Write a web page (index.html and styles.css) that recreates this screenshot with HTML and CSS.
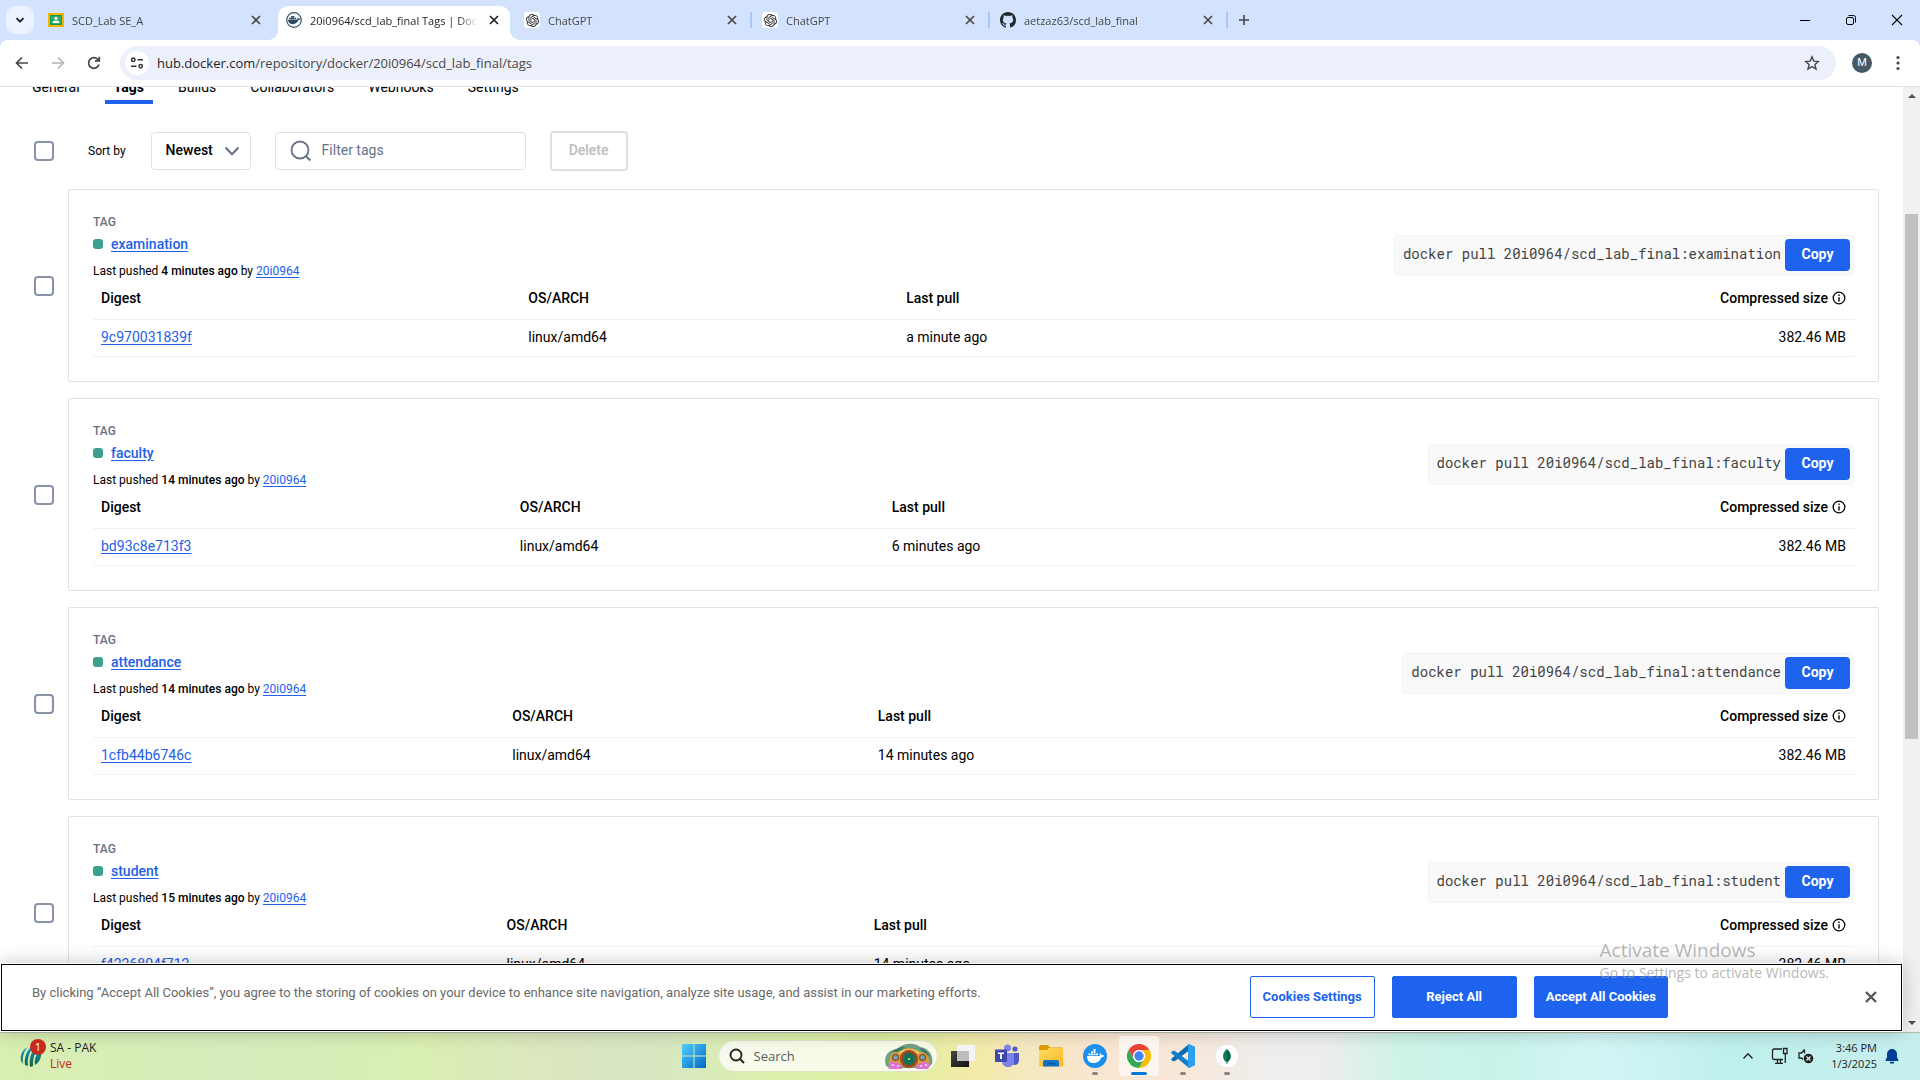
FILE: index.html
```html
<!DOCTYPE html>
<html lang="en">
<head>
<meta charset="utf-8">
<title>20i0964/scd_lab_final Tags | Docker Hub</title>
<link rel="stylesheet" href="styles.css">
</head>
<body>
<svg class="sprite" aria-hidden="true">
  <symbol id="i-x" viewBox="0 0 12 12"><path d="M2 2l8 8M10 2l-8 8" fill="none" stroke="currentColor" stroke-width="1.7"/></symbol>
  <symbol id="i-gpt" viewBox="0 0 24 24"><path fill="currentColor" d="M22.28 9.82a5.98 5.98 0 0 0-.51-4.91 6.05 6.05 0 0 0-6.51-2.9A6.07 6.07 0 0 0 4.98 4.18a5.98 5.98 0 0 0-4 2.9 6.05 6.05 0 0 0 .74 7.1 5.98 5.98 0 0 0 .51 4.91 6.05 6.05 0 0 0 6.51 2.9A5.98 5.98 0 0 0 13.26 24a6.06 6.06 0 0 0 5.77-4.21 5.99 5.99 0 0 0 4-2.9 6.06 6.06 0 0 0-.75-7.07zm-9.02 12.61a4.48 4.48 0 0 1-2.88-1.04l.14-.08 4.78-2.76a.8.8 0 0 0 .39-.68v-6.74l2.02 1.17a.07.07 0 0 1 .04.05v5.58a4.5 4.5 0 0 1-4.49 4.5zM3.6 18.3a4.47 4.47 0 0 1-.54-3.01l.14.09 4.78 2.76a.77.77 0 0 0 .78 0l5.84-3.37v2.33a.08.08 0 0 1-.03.06L9.74 19.95a4.5 4.5 0 0 1-6.14-1.65zM2.34 7.9a4.49 4.49 0 0 1 2.37-1.98v5.68a.77.77 0 0 0 .39.68l5.81 3.35-2.02 1.17a.08.08 0 0 1-.07 0l-4.83-2.79A4.5 4.5 0 0 1 2.34 7.87zm16.6 3.86l-5.84-3.39 2.02-1.16a.08.08 0 0 1 .07 0l4.83 2.79a4.49 4.49 0 0 1-.68 8.1v-5.68a.79.79 0 0 0-.4-.66zm2.01-3.03l-.14-.09-4.77-2.78a.78.78 0 0 0-.79 0L9.41 9.23V6.9a.07.07 0 0 1 .03-.06l4.83-2.79a4.5 4.5 0 0 1 6.68 4.66zM8.31 12.86l-2.02-1.16a.08.08 0 0 1-.04-.06V6.07a4.5 4.5 0 0 1 7.38-3.45l-.14.08L8.7 5.46a.8.8 0 0 0-.39.68zm1.1-2.37l2.6-1.5 2.6 1.5v3l-2.6 1.5-2.6-1.5z"/></symbol>
  <symbol id="i-info" viewBox="0 0 14 14"><circle cx="7" cy="7" r="5.8" fill="none" stroke="currentColor" stroke-width="1.3"/><path d="M6.3 3.6h1.4V5H6.3zM6.3 6.2h1.4v4.2H6.3z" fill="currentColor"/></symbol>
</svg>

<header class="tabstrip">
  <button class="tab-search" aria-label="Search tabs"><svg viewBox="0 0 12 12" width="12" height="12"><path d="M2.5 4.2L6 7.7l3.5-3.5" fill="none" stroke="#1f1f1f" stroke-width="1.8"/></svg></button>
  <div class="tab">
    <svg class="favicon" viewBox="0 0 16 16"><path fill="#f4b400" d="M0 1h16v14H0z"/><path fill="#0f9d58" d="M2 3h12v10H2z"/><path fill="#57bb8a" d="M3 4h10v8H3z" opacity=".4"/><circle cx="8" cy="6.3" r="1.6" fill="#fff"/><path fill="#fff" d="M4.5 11c0-2 2-2.6 3.500-2.600s3.500.6 3.500 2.600z"/></svg>
    <span class="tab-title">SCD_Lab SE_A</span>
    <button class="tab-close" aria-label="Close tab"><svg><use href="#i-x"/></svg></button>
  </div>
  <div class="tab active">
    <svg class="favicon" viewBox="0 0 16 16"><circle cx="8" cy="8" r="7.300" fill="#fff" stroke="#33566b" stroke-width="1.200"/><path fill="#26495f" d="M2 7.500h9.500c.3-.9.200-1.600-.2-2.200.9.200 1.300.7 1.400 1.400.6-.2 1.200-.1 1.600.2-.4.900-1.200 1.200-2 1.200-1 2.700-2.800 4.100-5.500 4.100C3.800 12.200 2.100 10.400 2 7.500zM3.400 5.700h4.900v1.400H3.400zM5.200 4h3.100v1.400H5.200zM8.600 5.700h1.500v1.400H8.600z"/></svg>
    <span class="tab-title">20i0964/scd_lab_final Tags | Docker Hub</span>
    <button class="tab-close" aria-label="Close tab"><svg><use href="#i-x"/></svg></button>
  </div>
  <div class="tab divided">
    <span class="favicon gpt"><svg><use href="#i-gpt"/></svg></span>
    <span class="tab-title">ChatGPT</span>
    <button class="tab-close" aria-label="Close tab"><svg><use href="#i-x"/></svg></button>
  </div>
  <div class="tab divided">
    <span class="favicon gpt"><svg><use href="#i-gpt"/></svg></span>
    <span class="tab-title">ChatGPT</span>
    <button class="tab-close" aria-label="Close tab"><svg><use href="#i-x"/></svg></button>
  </div>
  <div class="tab divided">
    <svg class="favicon" viewBox="0 0 16 16"><path fill="#24292f" d="M8 0C3.580 0 0 3.580 0 8c0 3.540 2.290 6.530 5.470 7.590.4.070.55-.17.55-.38 0-.19-.01-.82-.01-1.490-2.010.37-2.530-.49-2.690-.94-.09-.23-.48-.94-.82-1.130-.28-.15-.68-.52-.01-.53.63-.01 1.080.58 1.230.82.72 1.210 1.870.87 2.330.66.07-.52.28-.87.51-1.070-1.780-.2-3.640-.89-3.640-3.950 0-.87.31-1.590.82-2.150-.08-.2-.36-1.020.08-2.120 0 0 .67-.21 2.200.82.64-.18 1.320-.27 2-.27s1.360.09 2 .27c1.530-1.040 2.200-.82 2.200-.82.44 1.100.16 1.920.08 2.120.51.56.82 1.270.82 2.150 0 3.070-1.870 3.750-3.650 3.950.29.25.54.73.54 1.480 0 1.070-.01 1.930-.01 2.200 0 .21.15.46.55.38A8.010 8.010 0 0 0 16 8c0-4.420-3.580-8-8-8z"/></svg>
    <span class="tab-title">aetzaz63/scd_lab_final</span>
    <button class="tab-close" aria-label="Close tab"><svg><use href="#i-x"/></svg></button>
  </div>
  <button class="new-tab" aria-label="New tab"><svg viewBox="0 0 12 12" width="12" height="12"><path d="M6 1v10M1 6h10" stroke="#474747" stroke-width="1.600"/></svg></button>
  <div class="window-controls">
    <button aria-label="Minimize"><svg viewBox="0 0 12 12"><path d="M1 6.500h10" stroke="#000"/></svg></button>
    <button aria-label="Restore"><svg viewBox="0 0 12 12" fill="none" stroke="#000"><rect x="1.500" y="3.500" width="7" height="7" rx="1.500"/><path d="M3.500 1.500h5a2 2 0 0 1 2 2v5"/></svg></button>
    <button aria-label="Close"><svg viewBox="0 0 12 12"><path d="M1 1l10 10M11 1L1 11" stroke="#000" stroke-width="1.100"/></svg></button>
  </div>
</header>

<div class="toolbar-back">
<nav class="toolbar" aria-label="Browser toolbar">
  <button class="nav-button" aria-label="Back"><svg viewBox="0 0 16 16"><path d="M14 8H3M8 2.500L2.500 8 8 13.500"/></svg></button>
  <button class="nav-button disabled" aria-label="Forward"><svg viewBox="0 0 16 16"><path d="M2 8h11M8 2.500L13.500 8 8 13.500"/></svg></button>
  <button class="nav-button" aria-label="Reload"><svg viewBox="0 0 16 16"><path d="M13 9.500A5.300 5.300 0 1 1 12.300 5M13.300 1.700v4.200H9"/></svg></button>
  <div class="omnibox">
    <button class="site-info" aria-label="Site information"><svg viewBox="0 0 14 14" width="14" height="14" fill="none" stroke="#333" stroke-width="1.500"><circle cx="3.300" cy="3.800" r="1.700"/><path d="M7.500 3.800H13M1 10.200h5.500"/><circle cx="10.700" cy="10.200" r="1.700"/></svg></button>
    <div class="url"><span class="host">hub.docker.com</span>/repository/docker/20i0964/scd_lab_final/tags</div>
    <button class="bookmark" aria-label="Bookmark this tab"><svg viewBox="0 0 16 16" width="16" height="16"><path d="M8 1.800l1.800 4.300 4.600.4-3.500 3 1.100 4.500L8 11.600 4 14l1.100-4.500-3.500-3 4.600-.4z" fill="none" stroke="#474747" stroke-width="1.400"/></svg></button>
  </div>
  <button class="avatar" aria-label="Profile">M</button>
  <button class="menu" aria-label="Menu"><svg viewBox="0 0 4 16" width="4" height="16"><circle cx="2" cy="2.500" r="1.600"/><circle cx="2" cy="8" r="1.600"/><circle cx="2" cy="13.500" r="1.600"/></svg></button>
</nav>
</div>

<div class="viewport">
  <main class="page">
    <nav class="repo-tabs" aria-label="Repository">
      <a href="#general">General</a>
      <a href="#tags" class="current">Tags</a>
      <a href="#builds">Builds</a>
      <a href="#collaborators">Collaborators</a>
      <a href="#webhooks">Webhooks</a>
      <a href="#settings">Settings</a>
    </nav>

    <div class="filters">
      <input type="checkbox" class="check" aria-label="Select all tags">
      <label class="sort-label" for="sort">Sort by</label>
      <div class="select-wrap">
        <select id="sort"><option>Newest</option><option>Oldest</option></select>
        <svg viewBox="0 0 16 10" width="16" height="10"><path d="M1.500 1.500L8 8.300l6.500-6.800" fill="none" stroke="#677285" stroke-width="2"/></svg>
      </div>
      <div class="search-wrap">
        <svg viewBox="0 0 22 22" width="22" height="22"><circle cx="10" cy="10" r="8.500" fill="none" stroke="#677285" stroke-width="1.800"/><path d="M16 16.200l4.300 4.300" stroke="#677285" stroke-width="2"/></svg>
        <input type="text" placeholder="Filter tags" aria-label="Filter tags">
      </div>
      <button class="delete" disabled>Delete</button>
    </div>

    <div class="tag-row">
      <input type="checkbox" class="check" aria-label="Select examination">
      <article class="card">
        <div class="card-head">
          <div>
            <div class="overline">TAG</div>
            <div class="tag-name"><span class="dot"></span><a href="#examination">examination</a></div>
            <div class="pushed">Last pushed <b>4 minutes ago</b> by <a href="#20i0964">20i0964</a></div>
          </div>
          <div class="pull"><code>docker pull 20i0964/scd_lab_final:examination</code><button>Copy</button></div>
        </div>
        <table>
          <tr><th>Digest</th><th>OS/ARCH</th><th>Last pull</th><th class="size"><span>Compressed size <svg class="info"><use href="#i-info"/></svg></span></th></tr>
          <tr><td><a href="#9c970031839f">9c970031839f</a></td><td>linux/amd64</td><td>a minute ago</td><td class="size">382.46 MB</td></tr>
        </table>
      </article>
    </div>

    <div class="tag-row">
      <input type="checkbox" class="check" aria-label="Select faculty">
      <article class="card">
        <div class="card-head">
          <div>
            <div class="overline">TAG</div>
            <div class="tag-name"><span class="dot"></span><a href="#faculty">faculty</a></div>
            <div class="pushed">Last pushed <b>14 minutes ago</b> by <a href="#20i0964">20i0964</a></div>
          </div>
          <div class="pull"><code>docker pull 20i0964/scd_lab_final:faculty</code><button>Copy</button></div>
        </div>
        <table>
          <tr><th>Digest</th><th>OS/ARCH</th><th>Last pull</th><th class="size"><span>Compressed size <svg class="info"><use href="#i-info"/></svg></span></th></tr>
          <tr><td><a href="#bd93c8e713f3">bd93c8e713f3</a></td><td>linux/amd64</td><td>6 minutes ago</td><td class="size">382.46 MB</td></tr>
        </table>
      </article>
    </div>

    <div class="tag-row">
      <input type="checkbox" class="check" aria-label="Select attendance">
      <article class="card">
        <div class="card-head">
          <div>
            <div class="overline">TAG</div>
            <div class="tag-name"><span class="dot"></span><a href="#attendance">attendance</a></div>
            <div class="pushed">Last pushed <b>14 minutes ago</b> by <a href="#20i0964">20i0964</a></div>
          </div>
          <div class="pull"><code>docker pull 20i0964/scd_lab_final:attendance</code><button>Copy</button></div>
        </div>
        <table>
          <tr><th>Digest</th><th>OS/ARCH</th><th>Last pull</th><th class="size"><span>Compressed size <svg class="info"><use href="#i-info"/></svg></span></th></tr>
          <tr><td><a href="#1cfb44b6746c">1cfb44b6746c</a></td><td>linux/amd64</td><td>14 minutes ago</td><td class="size">382.46 MB</td></tr>
        </table>
      </article>
    </div>

    <div class="tag-row">
      <input type="checkbox" class="check" aria-label="Select student">
      <article class="card">
        <div class="card-head">
          <div>
            <div class="overline">TAG</div>
            <div class="tag-name"><span class="dot"></span><a href="#student">student</a></div>
            <div class="pushed">Last pushed <b>15 minutes ago</b> by <a href="#20i0964">20i0964</a></div>
          </div>
          <div class="pull"><code>docker pull 20i0964/scd_lab_final:student</code><button>Copy</button></div>
        </div>
        <table>
          <tr><th>Digest</th><th>OS/ARCH</th><th>Last pull</th><th class="size"><span>Compressed size <svg class="info"><use href="#i-info"/></svg></span></th></tr>
          <tr><td><a href="#f4226804f712">f4226804f712</a></td><td>linux/amd64</td><td>14 minutes ago</td><td class="size">382.46 MB</td></tr>
        </table>
      </article>
    </div>
  </main>

  <div class="scrollbar" aria-hidden="true">
    <svg viewBox="0 0 8 4" width="8" height="4"><path d="M4 0l4 4H0z" fill="#505050"/></svg>
    <div class="track"><div class="thumb"></div></div>
    <svg viewBox="0 0 8 4" width="8" height="4"><path d="M0 0h8L4 4z" fill="#505050"/></svg>
  </div>

  <section class="cookies" aria-label="Cookie banner">
    <p>By clicking “Accept All Cookies”, you agree to the storing of cookies on your device to enhance site navigation, analyze site usage, and assist in our marketing efforts.</p>
    <button class="outline">Cookies Settings</button>
    <button>Reject All</button>
    <button>Accept All Cookies</button>
    <button class="dismiss" aria-label="Close"><svg viewBox="0 0 12 12" width="12" height="12"><path d="M1 1l10 10M11 1L1 11" stroke="#565656" stroke-width="2.400"/></svg></button>
  </section>

  <div class="activation">
    <div class="activation-title">Activate Windows</div>
    <div>Go to Settings to activate Windows.</div>
  </div>
</div>

<footer class="taskbar">
  <div class="widgets">
    <span class="widget-icon">
      <svg viewBox="0 0 22 24" width="22" height="24"><defs><linearGradient id="g-globe" x1="0" y1="0" x2="0" y2="1"><stop offset="0" stop-color="#19a0e0"/><stop offset=".5" stop-color="#147a8c"/><stop offset="1" stop-color="#12663a"/></linearGradient></defs><path fill="url(#g-globe)" d="M8 3C3 5 0 10 1 17l2 3C2 13 4 7 8 3zM12 2C7 6 4 13 5 21l3 1C7 15 9 8 14 3zM15 4c-4 4-6 11-5 19l3-1c0-7 1-12 5-16zM19 7c-3 4-5 9-4 14 4-2 7-8 6-13z"/></svg>
      <span class="badge">1</span>
    </span>
    <div class="widget-text"><div>SA - PAK</div><div class="live">Live</div></div>
  </div>

  <div class="apps">
    <button class="app" aria-label="Start"><svg viewBox="0 0 24 24"><defs><linearGradient id="g-win" x1="0" y1="0" x2="1" y2="1"><stop offset="0" stop-color="#50cffa"/><stop offset="1" stop-color="#0067c8"/></linearGradient></defs><path fill="url(#g-win)" d="M0 0h11.500v11.500H0zM12.500 0H24v11.500H12.500zM0 12.500h11.500V24H0zM12.500 12.500H24V24H12.500z"/></svg></button>
    <div class="task-search">
      <svg viewBox="0 0 16 16" width="16" height="16"><circle cx="7" cy="7" r="5.500" fill="none" stroke="#222" stroke-width="1.800"/><path d="M11 11l4 4" stroke="#222" stroke-width="2"/></svg>
      <input type="text" placeholder="Search" aria-label="Search">
      <svg viewBox="0 0 50 26" width="50" height="26"><path fill="#6fa184" d="M2 23C-1 13 4 7 13 6 19 0 30-1 36 4c9 1 14 9 12 17l-4 4H6z"/><path fill="#3f7d62" d="M8 9c4-4 9-5 13-5l-6 6zM36 5c6 1 9 5 10 9l-8-5z"/><path fill="#d59b3a" d="M5 23c-1-7 1-12 6-14 5 1 7-4 14-4s9 5 14 4c5 2 7 7 6 14z"/><path fill="#efc860" d="M14 10c3-3 6-4 11-4s8 1 11 4l-2 1c-3-2-5-3-9-3s-6 1-9 3z"/><circle cx="25" cy="16" r="9" fill="#8f4a24"/><circle cx="25" cy="16" r="8.500" fill="none" stroke="#c8502c" stroke-width="1.500" stroke-dasharray="2 2"/><circle cx="25" cy="16" r="6" fill="#137a5f"/><path stroke="#0c5a46" stroke-width=".8" d="M22 11v10M28 11v10M25 10v12"/><circle cx="25" cy="16" r="1" fill="#ffe27a"/><circle cx="11.500" cy="14.500" r="3.500" fill="#8a4a2a"/><circle cx="11.500" cy="14.500" r="2.300" fill="#6ea9ad"/><circle cx="38.500" cy="14.500" r="3.500" fill="#8a4a2a"/><circle cx="38.500" cy="14.500" r="2.300" fill="#6ea9ad"/><path fill="#dd75cf" d="M4 25l2-5 3-2 2 2 2-1 2 2 2 1 1 4H6zM32 26l1-4 3-1 2-3 2 2 3-1 3 3-2 4z"/><path fill="#f3c0ee" d="M8 21h2v2H8zM13 22h2v2h-2zM36 22h2v2h-2zM41 21h2v2h-2z"/></svg>
    </div>
    <button class="app" aria-label="Task view"><svg viewBox="0 0 24 24"><defs><linearGradient id="g-tv" x1="0" y1="0" x2="1" y2="1"><stop offset="0" stop-color="#444"/><stop offset="1" stop-color="#111"/></linearGradient></defs><path fill="url(#g-tv)" d="M0 7h18v16H0z"/><path fill="#f4f4f4" d="M6 1h18v16H6z"/><path fill="#bdbdbd" d="M6 7h12v10H6z"/></svg></button>
    <button class="app" aria-label="Teams"><svg viewBox="0 0 24 24"><circle cx="20" cy="5" r="2.600" fill="#5059c9"/><circle cx="12.500" cy="4" r="3.500" fill="#7b83eb"/><path fill="#5059c9" d="M16 9h8v7c0 3-2 5-4 5s-4-2-4-4z"/><path fill="#7b83eb" d="M7 9h12v8c0 4-3 6-6 6s-6-2-6-6z"/><rect y="5.500" width="12" height="12.500" rx="1" fill="#4048a8"/><path fill="#fff" d="M3 8.500h6v1.600H6.900V15H5.100v-4.900H3z"/></svg></button>
    <button class="app" aria-label="File Explorer"><svg viewBox="0 0 24 24"><defs><linearGradient id="g-f" x1="0" y1="0" x2="1" y2="1"><stop offset="0" stop-color="#ffdb6b"/><stop offset="1" stop-color="#fbb917"/></linearGradient></defs><path fill="#dd9a05" d="M0 2.500L1.500 1H9l2 2.500H23.500V8H0z"/><path fill="url(#g-f)" d="M0 6h8l2-2h14v18.500H0z"/><path fill="#0f72c9" d="M4 22.500V18a2 2 0 0 1 2-2h12a2 2 0 0 1 2 2v4.500z"/><path fill="#0a4f98" d="M8 19h8v1.500H8z"/></svg></button>
    <button class="app running" aria-label="Docker Desktop"><svg viewBox="0 0 24 24"><circle cx="12" cy="12" r="12" fill="#1d90ed"/><path fill="#fff" d="M4 12h12.500c.7-1.200.5-2.200 0-3 1.300.4 1.900 1.200 2 2.200 1-.2 1.900-.1 2.700.5-.6 1.300-1.700 1.700-2.900 1.700C16.800 17 14 19 10.300 19 6.300 19 4 16.500 4 12zM5.500 9.500h2V11.300h-2zM8 9.500h2v1.800H8zM10.500 9.500h2v1.800h-2zM13 9.500h2v1.800h-2zM8 7.300h2v1.800H8zM10.500 7.300h2v1.800h-2zM10.500 5.100h2v1.800h-2z"/></svg></button>
    <button class="app running current" aria-label="Google Chrome"><svg viewBox="0 0 24 24"><circle cx="12" cy="12" r="12" fill="#fff"/><path fill="#ea4335" d="M1.600 6A12 12 0 0 1 22.400 6H12a6 6 0 0 0-5.200 9z"/><path fill="#fbbc04" d="M22.400 6A12 12 0 0 1 12 24l5.200-9A6 6 0 0 0 12 6z"/><path fill="#34a853" d="M12 24A12 12 0 0 1 1.600 6l5.200 9a6 6 0 0 0 10.400 0z"/><circle cx="12" cy="12" r="6" fill="#fff"/><circle cx="12" cy="12" r="4.700" fill="#4285f4"/></svg></button>
    <button class="app running" aria-label="Visual Studio Code"><svg viewBox="0 0 24 24"><path fill="#0b6eb5" d="M18 0L0 15l1.500 2.300L4 17 18 6.500z"/><path fill="#1180c9" d="M18 24L0 9l1.500-2.300L4 7l14 10.500z"/><path fill="#2ba0ee" d="M17 0h1l6 2.700v18.600L18 24h-1z"/></svg></button>
    <button class="app running" aria-label="MongoDB Compass"><svg viewBox="0 0 24 24"><circle cx="12" cy="12" r="11" fill="#fff"/><path fill="#00684a" d="M12 5c3 3 4.200 5 3.800 8-.3 2.400-1.700 4-3.300 5l-.2 2h-.6l-.2-2c-1.600-1-3-2.600-3.300-5C7.800 10 9 8 12 5z"/><path fill="#12905c" d="M12 5v15h-.3l-.2-2c-1.600-1-3-2.600-3.300-5C7.800 10 9 8 12 5z" opacity=".5"/></svg></button>
  </div>

  <div class="tray">
    <button class="tray-button" aria-label="Show hidden icons"><svg viewBox="0 0 12 12" width="12" height="12"><path d="M1.500 8.500L6 3.800l4.500 4.700" fill="none" stroke="#222" stroke-width="1.400"/></svg></button>
    <button class="status" aria-label="Network and sound">
      <svg viewBox="0 0 18 18" width="18" height="18" fill="none" stroke="#222" stroke-width="1.300"><path d="M11 2H3a1.500 1.500 0 0 0-1.500 1.500V11A1.500 1.500 0 0 0 3 12.500h9M4 16.300h8M6.500 12.500v3.800M9.500 12.500v3.800M12.500 1.500h3.500v5h-3.500zM14.300 6.500V16"/></svg>
      <svg viewBox="0 0 18 18" width="18" height="18"><path d="M7.500 2.500v4M7.500 2.500L4.500 6H2v5h2.500l1.500 1.500" fill="none" stroke="#222" stroke-width="1.300"/><circle cx="11.500" cy="11.500" r="4.800" fill="#222"/><path d="M9.500 9.500l4 4M13.500 9.500l-4 4" stroke="#d5f5f2" stroke-width="1.200"/></svg>
    </button>
    <div class="clock"><div>3:46 PM</div><div>1/3/2025</div></div>
    <button class="bell" aria-label="Notifications"><svg viewBox="0 0 14 16" width="14" height="16"><path fill="#003e92" d="M7 1a5 5 0 0 1 5 5v3.500l1.500 2.500v1H.5v-1L2 9.500V6a5 5 0 0 1 5-5zM4.500 13.800h5a2.500 2 0 0 1-5 0z"/></svg></button>
  </div>
</footer>
</body>
</html>
```
FILE: styles.css
```css
* { box-sizing: border-box; }

body {
  margin: 0;
  height: 100vh;
  display: flex;
  flex-direction: column;
  overflow: hidden;
  background: #fff;
  color: #000;
  font: 14px/20px Roboto, sans-serif;
}

button {
  margin: 0;
  padding: 0;
  border: 0;
  background: none;
  font: inherit;
  color: inherit;
}

a { color: #2560e8; text-underline-offset: 2px; }

.sprite { position: absolute; width: 0; height: 0; }

/* Browser tab strip */
.tabstrip {
  flex: none;
  display: flex;
  align-items: center;
  height: 40px;
  padding-left: 6px;
  background: #d3e3fd;
  font: 11px/16px "Segoe UI", "Open Sans", sans-serif;
  color: #474747;
}

.tab-search {
  display: grid;
  place-items: center;
  width: 28px;
  height: 28px;
  margin-right: 6px;
  border-radius: 10px;
  background: #ecf3fe;
}

.tab {
  position: relative;
  display: flex;
  align-items: center;
  gap: 8px;
  width: 232px;
  height: 34px;
  margin: 6px 6px 0 0;
  padding: 0 8px 6px;
}

.tab.active {
  background: #fff;
  border-radius: 10px 10px 0 0;
  color: #1f1f1f;
}

.tab.active::before,
.tab.active::after {
  content: "";
  position: absolute;
  bottom: 0;
  width: 10px;
  height: 10px;
}

.tab.active::before { right: 100%; background: radial-gradient(circle at 0 0, transparent 10px, #fff 10px); }
.tab.active::after { left: 100%; background: radial-gradient(circle at 100% 0, transparent 10px, #fff 10px); }

.tab.divided::after {
  content: "";
  position: absolute;
  left: 234px;
  top: 6px;
  width: 2px;
  height: 16px;
  background: #a8c7fa;
}

.favicon { flex: none; width: 16px; height: 16px; }

.gpt {
  display: grid;
  place-items: center;
  border-radius: 3px;
  background: #fff;
  color: #222;
}

.gpt svg { width: 13px; height: 13px; }

.tab-title {
  flex: 1;
  min-width: 0;
  padding-top: 2px;
  overflow: hidden;
  white-space: nowrap;
  mask-image: linear-gradient(to right, #000 calc(100% - 20px), transparent);
}

.tab-close { display: grid; place-items: center; width: 16px; height: 16px; }
.tab-close svg { width: 12px; height: 12px; }

.new-tab { display: grid; place-items: center; width: 28px; height: 28px; }

.window-controls { display: flex; margin-left: auto; }
.window-controls button { display: grid; place-items: center; width: 46px; height: 40px; }
.window-controls svg { width: 12px; height: 12px; }

/* Browser toolbar */
.toolbar-back { flex: none; background: #d3e3fd; }

.toolbar {
  display: flex;
  align-items: center;
  height: 47px;
  padding: 0 10px 1px 4px;
  border-bottom: 1px solid #dfe1e5;
  border-radius: 8px 8px 0 0;
  background: #fff;
  font-family: "Segoe UI", "Open Sans", sans-serif;
}

.nav-button { display: grid; place-items: center; width: 36px; height: 34px; }
.nav-button svg { width: 16px; height: 16px; fill: none; stroke: #474747; stroke-width: 1.7; }
.nav-button.disabled svg { stroke: #b4b4b4; }

.omnibox {
  flex: 1;
  display: flex;
  align-items: center;
  height: 34px;
  margin-left: 8px;
  padding: 0 16px 0 5px;
  border-radius: 17px;
  background: #ecf0fa;
}

.site-info {
  display: grid;
  place-items: center;
  width: 24px;
  height: 24px;
  margin-right: 8px;
  border-radius: 12px;
  background: #fff;
}

.url { flex: 1; font-size: 13px; color: #474747; }
.host { color: #1f1f1f; }
.bookmark { display: grid; place-items: center; width: 16px; height: 16px; }

.avatar {
  width: 20px;
  height: 20px;
  margin: 0 14px 0 16px;
  border-radius: 10px;
  background: #455a64;
  color: #fff;
  font: 11px/20px Roboto, sans-serif;
}

.menu { display: grid; place-items: center; width: 24px; height: 24px; fill: #474747; }

/* Page area */
.viewport {
  flex: 1;
  min-height: 0;
  position: relative;
  display: flex;
}

.page {
  flex: 1;
  min-width: 0;
  overflow: hidden;
  padding: 0 24px 0 34px;
}

.scrollbar {
  display: flex;
  flex-direction: column;
  align-items: center;
  width: 17px;
  padding: 7px 2px;
  background: #f1f1f1;
}

.track { flex: 1; width: 100%; padding: 116px 0 0; }
.thumb { height: 65%; min-height: 40px; background: #c1c1c1; }

/* The page is scrolled, so the row of links is cut by the toolbar. */
.repo-tabs {
  display: flex;
  gap: 16px;
  margin: -10px 0 27px -11px;
}

.repo-tabs a {
  padding: 0 9px 3px;
  border-bottom: 4px solid transparent;
  color: #000;
  text-decoration: none;
}

.repo-tabs .current { border-color: #1d63ed; font-weight: 700; }

.filters {
  display: flex;
  align-items: center;
  margin-bottom: 18px;
}

.check {
  flex: none;
  appearance: none;
  width: 20px;
  height: 20px;
  margin: 0;
  border: 2px solid #8993a8;
  border-radius: 4px;
  background: #fff;
}

.sort-label { margin: 0 25px 0 34px; font-size: 12px; }

.select-wrap, .search-wrap { display: grid; align-items: center; }
.select-wrap > *, .search-wrap > * { grid-area: 1 / 1; }

.select-wrap select,
.search-wrap input {
  appearance: none;
  height: 38px;
  border: 1px solid #dfe1e6;
  border-radius: 4px;
  background: #fff;
  color: #000;
  font: 14px/20px Roboto, sans-serif;
}

.select-wrap select { width: 100px; padding: 0 14px 2px; font-weight: 500; }
.select-wrap svg { justify-self: end; margin-right: 11px; pointer-events: none; }

.search-wrap { margin: 0 24px; }
.search-wrap input { width: 251px; padding: 0 12px 2px 46px; }
.search-wrap input::placeholder { color: #677285; opacity: 1; }
.search-wrap svg { z-index: 1; margin-left: 15px; }

.delete {
  width: 78px;
  height: 40px;
  padding-bottom: 2px;
  border: 2px solid #dfdfe2;
  border-radius: 4px;
  color: #bcbcbe;
  font-weight: 500;
}

.tag-row {
  display: flex;
  align-items: center;
  gap: 14px;
  margin-bottom: 16px;
}

.card {
  flex: 1;
  min-width: 0;
  padding: 24px;
  border: 1px solid #e1e2e6;
  border-radius: 2px;
}

.card-head { display: flex; justify-content: space-between; align-items: flex-end; }

.overline { font-size: 12px; line-height: 16px; font-weight: 500; color: #677285; }

.tag-name {
  display: flex;
  align-items: center;
  gap: 8px;
  margin: 4px 0 8px;
  font-weight: 500;
}

.dot { width: 10px; height: 10px; border-radius: 3px; background: #3ba08d; }

.pushed { font-size: 12px; line-height: 18px; }
.pushed b { font-weight: 500; }

.pull {
  display: flex;
  align-items: center;
  gap: 4px;
  margin-bottom: 4px;
  padding: 3px 3px 4px 8px;
  border: 1px solid #f3f4f6;
  border-radius: 4px;
  background: #f9f9fa;
}

.pull code { padding-bottom: 2px; color: #444; font: 14px/20px "Roboto Mono", "DejaVu Sans Mono", monospace; }

.pull button {
  width: 65px;
  height: 32px;
  padding-bottom: 2px;
  border-radius: 4px;
  background: #1d63ed;
  color: #fff;
  font-weight: 700;
}

table { width: 100%; border-collapse: separate; border-spacing: 0; }
th, td { padding: 7px 8px 9px; border-bottom: 1px solid #f1f2f4; text-align: left; font-weight: 400; }
th { padding: 8px 8px 11px; font-weight: 500; }
.size { text-align: right; }
.size span { display: inline-flex; align-items: center; gap: 4px; white-space: nowrap; }
.info { width: 14px; height: 14px; }

/* Cookie banner over the page */
.cookies {
  position: absolute;
  left: 0;
  right: 17px;
  bottom: 0;
  display: flex;
  align-items: center;
  gap: 17px;
  margin: 1px;
  padding: 11px 24px 12px 30px;
  border: 1px solid #000;
  outline: 1px solid #fff;
  background: #fff;
  box-shadow: 0 0 18px rgba(0, 0, 0, .25);
  font-size: 13px;
}

.cookies p { flex: 1; margin: 0; padding-bottom: 8px; color: #696969; }

.cookies button {
  min-width: 125px;
  height: 42px;
  padding: 0 11px;
  border: 1px solid #1d63ed;
  border-radius: 2px;
  background: #1d63ed;
  color: #fff;
  font-weight: 700;
}

.cookies .outline { background: #fff; color: #1d63ed; }

.cookies .dismiss {
  display: grid;
  place-items: center;
  min-width: 12px;
  margin-left: 180px;
  padding: 0;
  border: 0;
  background: none;
}

.activation {
  position: absolute;
  right: 91px;
  bottom: 49px;
  color: rgba(150, 150, 150, .7);
  font: 14px/20px "Segoe UI", "Open Sans", sans-serif;
  pointer-events: none;
}

.activation-title { font-size: 19px; line-height: 26px; }

/* Windows taskbar */
.taskbar {
  flex: none;
  display: grid;
  grid-template-columns: 1fr auto 1fr;
  align-items: center;
  height: 48px;
  padding-bottom: 1px;
  border-top: 1px solid #b5bdb0;
  background: linear-gradient(90deg, #d9efb0 0%, #d5ecbb 12%, #d6edb6 18%, #daefb2 22%, #dbe6c0 29%, #d6e7c2 34%, #dcefac 40%, #ddf0a0 46%, #f3eaaa 51%, #f6e8c4 54%, #fae6d2 58%, #f7e8da 62%, #efeeee 66%, #eceeee 69%, #cdf4e8 73%, #c8f2ea 78%, #d3f6f5 83%, #bff0ec 90%, #c6eeee 100%);
  font: 11px/16px "Segoe UI", "Open Sans", sans-serif;
  color: #222;
}

.widgets { display: flex; align-items: center; gap: 8px; padding-left: 20px; }
.widget-icon { position: relative; height: 24px; }
.widget-text { font-size: 12px; }

.badge {
  position: absolute;
  left: 10px;
  top: -5px;
  width: 16px;
  height: 16px;
  border-radius: 8px;
  background: #c42b1c;
  color: #fff;
  text-align: center;
}

.live { color: #c42b1c; }

.apps { display: flex; align-items: center; gap: 4px; }

.app {
  position: relative;
  display: grid;
  place-items: center;
  width: 40px;
  height: 40px;
  border-radius: 4px;
}

.app svg { width: 24px; height: 24px; }
.app.current { background: rgba(255, 255, 255, .6); }

.app.running::after {
  content: "";
  position: absolute;
  left: 17px;
  bottom: 1px;
  width: 6px;
  height: 3px;
  border-radius: 2px;
  background: #8a857c;
}

.app.current::after { left: 12px; width: 16px; background: #0078d4; }

.task-search {
  display: flex;
  align-items: center;
  gap: 9px;
  width: 220px;
  height: 32px;
  margin: 0 1px 0 0;
  padding: 0 3px 0 10px;
  border: 1px solid #dfe3c4;
  border-radius: 16px;
  background: rgba(255, 255, 255, .75);
}

.task-search svg { flex: none; }

.task-search input {
  flex: 1;
  min-width: 0;
  padding: 0;
  border: 0;
  background: none;
  font: 13px/20px "Segoe UI", "Open Sans", sans-serif;
}

.task-search input::placeholder { color: #5c5c5c; opacity: 1; }

.tray { display: flex; align-items: center; justify-content: flex-end; padding-right: 21px; }
.tray-button { display: grid; place-items: center; width: 24px; height: 24px; margin-right: 11px; }
.status { display: flex; align-items: center; gap: 8px; margin-right: 16px; }
.clock { text-align: right; white-space: nowrap; }
.bell { display: grid; place-items: center; margin-left: 8px; }
```
